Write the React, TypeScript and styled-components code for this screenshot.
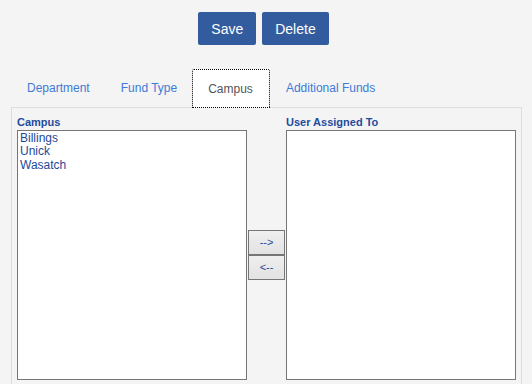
import React from "react";
import styled, { createGlobalStyle } from "styled-components";

const Global = createGlobalStyle`
  html, body { margin: 0; padding: 0; background: #f4f4f4; }
  body { font-family: "Liberation Sans", Arial, sans-serif; }
`;

const Page = styled.div`
  width: 532px;
  height: 384px;
  overflow: hidden;
  box-sizing: border-box;
  padding: 12px 10px 0 10px;
`;

const Toolbar = styled.div`
  display: flex;
  justify-content: center;
  gap: 6px;
  padding-right: 5px;
`;

const ActionButton = styled.button`
  height: 33px;
  padding: 0 13px;
  border: none;
  border-radius: 2px;
  background: #335c9e;
  color: #ffffff;
  font-family: "Liberation Sans", Arial, sans-serif;
  font-size: 14px;
`;

const Tabs = styled.div`
  display: flex;
  margin-top: 24px;
  padding-left: 1px;
  height: 39px;
  position: relative;
  z-index: 1;
`;

const Tab = styled.div<{ $active?: boolean }>`
  box-sizing: border-box;
  height: ${(p) => (p.$active ? "39px" : "38px")};
  display: flex;
  align-items: center;
  padding: ${(p) => (p.$active ? "0 16px 0 15px" : "0 14px 0 15px")};
  font-size: 12px;
  color: ${(p) => (p.$active ? "#555555" : "#3d7bd6")};
  border: 1px dotted ${(p) => (p.$active ? "#000" : "transparent")};
  background: ${(p) => (p.$active ? "#ffffff" : "transparent")};
  border-radius: 2px 2px 0 0;
`;

const Panel = styled.div`
  margin-left: 1px;
  margin-top: -1px;
  width: 511px;
  height: 300px;
  box-sizing: border-box;
  border: 1px solid #dddddd;
  padding: 6px 5px 0 5px;
`;

const Grid = styled.div`
  display: grid;
  grid-template-columns: 230px 39px 230px;
  grid-template-rows: 16px 250px;
`;

const Label = styled.div`
  font-size: 11px;
  font-weight: bold;
  color: #1f4c9c;
  line-height: 16px;
`;

const ListBox = styled.div`
  box-sizing: border-box;
  border: 1px solid #767676;
  background: #ffffff;
  padding: 1px 2px;
`;

const Item = styled.div`
  font-size: 12px;
  line-height: 13.4px;
  color: #1c4a9a;
`;

const Mover = styled.div`
  display: flex;
  flex-direction: column;
  align-self: center;
  padding: 0 0 1px 1px;
`;

const MoveButton = styled.button`
  display: block;
  margin: 0;
  width: 37px;
  height: 25px;
  padding: 0;
  box-sizing: border-box;
  border: 1px solid #767676;
  background: linear-gradient(#efefef, #e2e2e2);
  color: #1c4a9a;
  font-family: "Liberation Sans", Arial, sans-serif;
  font-size: 11px;
`;

export default function App() {
  return (
    <>
      <Global />
      <Page>
        <Toolbar>
          <ActionButton>Save</ActionButton>
          <ActionButton>Delete</ActionButton>
        </Toolbar>
        <Tabs>
          <Tab>Department</Tab>
          <Tab>Fund Type</Tab>
          <Tab $active>Campus</Tab>
          <Tab>Additional Funds</Tab>
        </Tabs>
        <Panel>
          <Grid>
            <Label>Campus</Label>
            <div />
            <Label>User Assigned To</Label>
            <ListBox>
              <Item>Billings</Item>
              <Item>Unick</Item>
              <Item>Wasatch</Item>
            </ListBox>
            <Mover>
              <MoveButton>--&gt;</MoveButton>
              <MoveButton>&lt;--</MoveButton>
            </Mover>
            <ListBox />
          </Grid>
        </Panel>
      </Page>
    </>
  );
}
